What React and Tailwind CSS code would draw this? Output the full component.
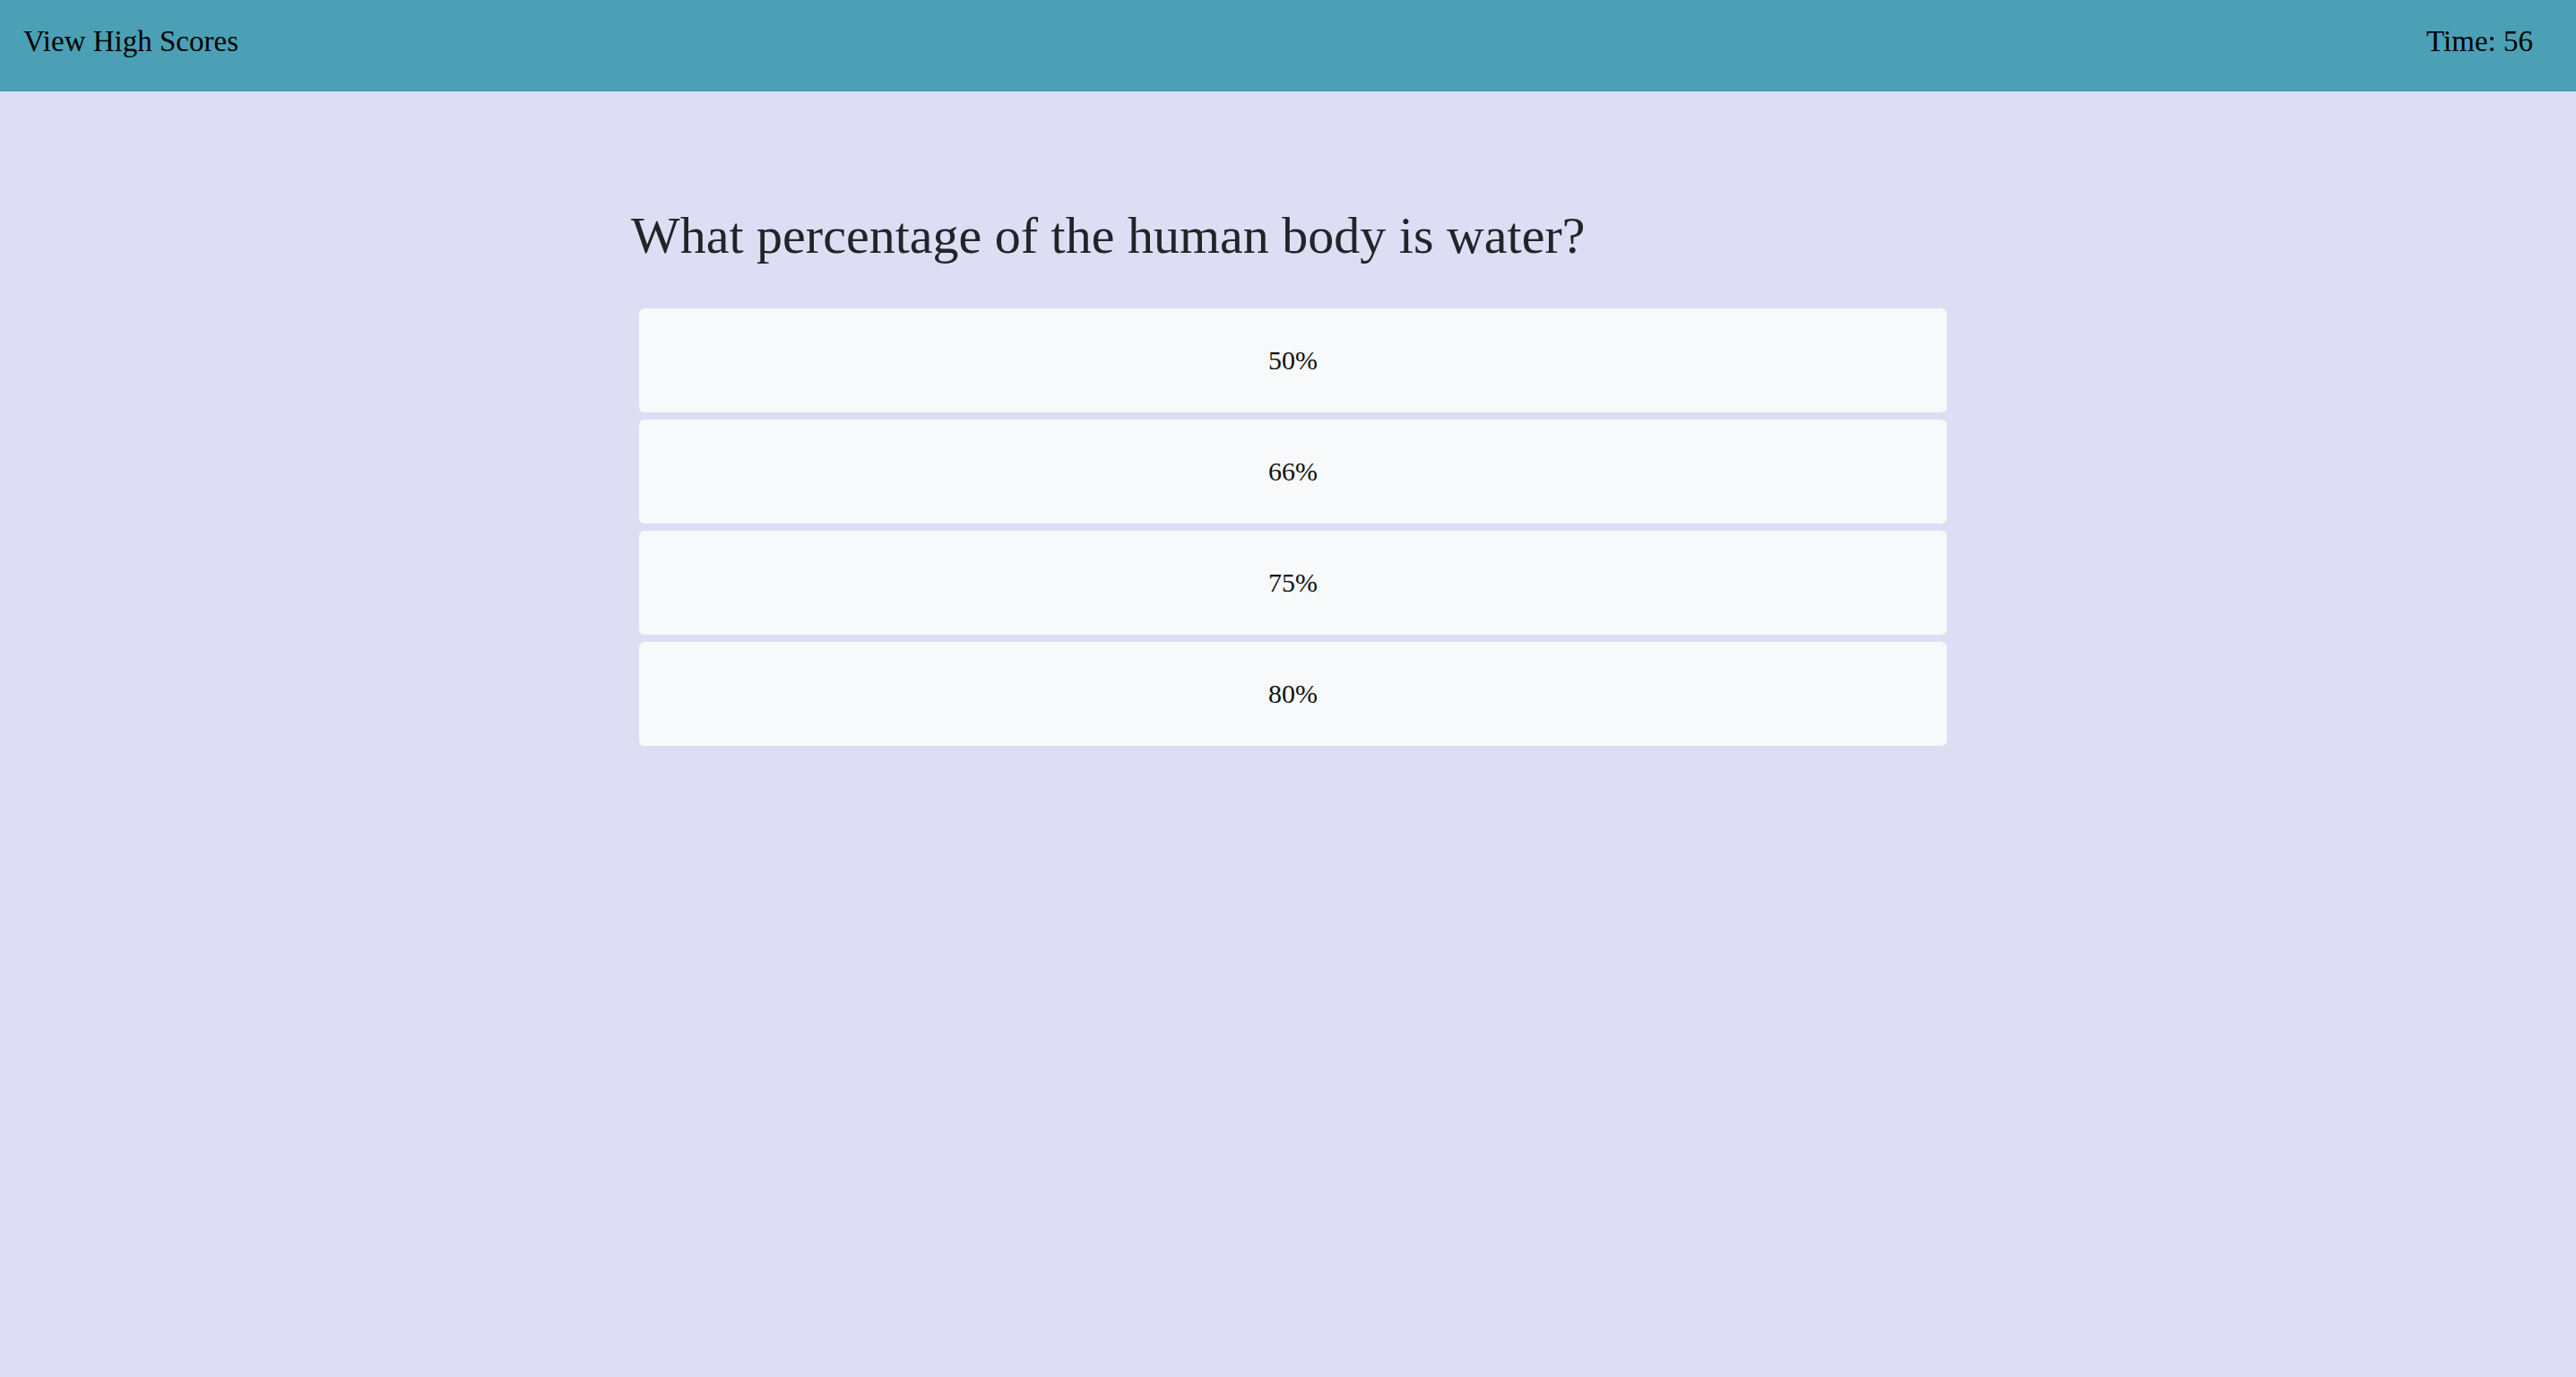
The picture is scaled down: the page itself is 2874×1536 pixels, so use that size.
import React, { useState, useEffect } from 'react';

const answers = ['50%', '66%', '75%', '80%'];

const App = () => {
    const [time, setTime] = useState(56);
    const [picked, setPicked] = useState(null);

    useEffect(() => {
        // keep the clock frozen for the screenshot
        setTime(56);
    }, []);

    return (
        <div className="min-h-screen bg-[#dddef3] font-['Liberation_Serif',serif] text-black">
            <header className="h-[102px] bg-[#4ba0b5] flex items-start justify-between pl-[26px] pr-[48px] pt-[30px]">
                <a href="#" className="text-[33px] leading-none text-black">View High Scores</a>
                <span className="text-[33px] leading-none">Time: {time}</span>
            </header>

            <main className="w-[1474px] mx-auto pt-[132px]">
                <h1 className="text-[58px] leading-none text-[#212529] pl-[4px]">
                    What percentage of the human body is water?
                </h1>
                <div className="mt-[52px] flex flex-col gap-[8px] pl-[13px] pr-[2px]">
                    {answers.map((a) => (
                        <button
                            key={a}
                            type="button"
                            onClick={() => setPicked(a)}
                            className="h-[116px] w-full rounded-md bg-[#f8f9fa] flex items-center justify-center text-[30px] leading-none text-[#111]"
                        >
                            {a}
                        </button>
                    ))}
                </div>
            </main>
        </div>
    );
};

export default App;
